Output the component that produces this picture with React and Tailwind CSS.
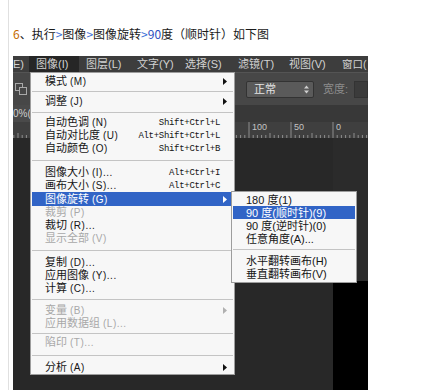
import React from "react";

const CJK = "font-['Noto_Sans_CJK_SC',sans-serif]";
const MENU = "font-['Liberation_Sans','Noto_Sans_CJK_SC',sans-serif]";

const mainItems = [
  { label: "模式(M)", arrow: true },
  { sep: "h-[7px]" },
  { label: "调整(J)", arrow: true },
  { sep: "h-[8px]" },
  { label: "自动色调(N)", sc: "Shift+Ctrl+L" },
  { label: "自动对比度(U)", sc: "Alt+Shift+Ctrl+L" },
  { label: "自动颜色(O)", sc: "Shift+Ctrl+B" },
  { sep: "h-[11px]" },
  { label: "图像大小(I)...", sc: "Alt+Ctrl+I" },
  { label: "画布大小(S)...", sc: "Alt+Ctrl+C" },
  { label: "图像旋转(G)", arrow: true, active: true, tall: true },
  { label: "裁剪(P)", disabled: true },
  { label: "裁切(R)..." },
  { label: "显示全部(V)", disabled: true },
  { sep: "h-[11px]" },
  { label: "复制(D)..." },
  { label: "应用图像(Y)..." },
  { label: "计算(C)..." },
  { sep: "h-[9px]" },
  { label: "变量(B)", arrow: true, disabled: true },
  { label: "应用数据组(L)...", disabled: true },
  { sep: "h-[6px]" },
  { label: "陷印(T)...", disabled: true },
  { sep: "h-[12px]" },
  { label: "分析(A)", arrow: true },
];

const subItems = [
  { label: "180 度(1)" },
  { label: "90 度(顺时针)(9)", active: true },
  { label: "90 度(逆时针)(0)" },
  { label: "任意角度(A)..." },
  { sep: "h-[9px]" },
  { label: "水平翻转画布(H)" },
  { label: "垂直翻转画布(V)" },
];

function Arrow({ color }) {
  return (
    <svg width="4" height="7" viewBox="0 0 4 7" className="block">
      <path d="M0 0 L4 3.5 L0 7 Z" fill={color} />
    </svg>
  );
}

function Sep({ h }) {
  return (
    <div className={`${h} flex items-center`}>
      <div className="w-full h-px bg-[#c4c4c4]" />
    </div>
  );
}

function Label({ text }) {
  const m = text.match(/^([^(]+)(\(.*)$/);
  if (!m) return <span>{text}</span>;
  return (
    <span className="whitespace-nowrap">
      <span>{m[1]}</span>
      <span className="ml-[3px] text-[10px] tracking-[0.5px]">{m[2]}</span>
    </span>
  );
}

function MainMenu() {
  return (
    <div className={`absolute left-[17px] top-[16px] w-[205px] h-[303px] bg-[#f7f7f7] border border-[#9d9d9d] px-px pt-[2px] ${MENU} text-[11px]`}>
      {mainItems.map((it, i) => {
        if (it.sep) return <Sep key={i} h={it.sep} />;
        const color = it.active
          ? "bg-[#3164c6] text-white"
          : it.disabled
          ? "text-[#a8a8a8]"
          : "text-[#151515]";
        return (
          <div
            key={i}
            className={`${it.tall ? "h-[14px]" : "h-[13px]"} flex items-center pl-[13px] pr-[5px] leading-[12px] ${color}`}
          >
            <div className="flex-1">
              <Label text={it.label} />
            </div>
            {it.sc && (
              <span className="font-['Liberation_Mono',monospace] text-[9px] tracking-[-0.3px]">
                {it.sc}
              </span>
            )}
            <div className="w-[8px] flex justify-end pr-[1px]">
              {it.arrow && (
                <Arrow color={it.active ? "#ffffff" : it.disabled ? "#b0b0b0" : "#111111"} />
              )}
            </div>
          </div>
        );
      })}
    </div>
  );
}

function SubMenu() {
  return (
    <div className={`absolute left-[218px] top-[135px] w-[126px] h-[92px] bg-[#f7f7f7] border border-[#9d9d9d] px-px pt-px ${MENU} text-[11px]`}>
      {subItems.map((it, i) => {
        if (it.sep) return <Sep key={i} h={it.sep} />;
        return (
          <div
            key={i}
            className={`h-[13px] flex items-center pl-[13px] leading-[12px] whitespace-nowrap ${
              it.active ? "bg-[#3164c6] text-white" : "text-[#151515]"
            }`}
          >
            {it.label}
          </div>
        );
      })}
    </div>
  );
}

function Ruler() {
  const ticks = [];
  for (let i = 0; i < 90; i++) {
    const x = 236 - 42 * 6 + i * 4.2;
    if (x < 0 || x > 355) continue;
    const k = i % 10;
    const h = k === 0 ? 16 : k === 5 ? 5 : 3;
    ticks.push(
      <line key={i} x1={x} x2={x} y1={16 - h} y2={16} stroke="#8e8e8e" strokeWidth="1" />
    );
  }
  return (
    <svg width="355" height="16" className="block">
      {ticks}
      <text x="239" y="8" fontSize="9" fill="#c4c4c4" fontFamily="Liberation Sans">100</text>
      <text x="281" y="8" fontSize="9" fill="#c4c4c4" fontFamily="Liberation Sans">50</text>
      <text x="323" y="8" fontSize="9" fill="#c4c4c4" fontFamily="Liberation Sans">0</text>
    </svg>
  );
}

function Screenshot() {
  const bar = [
    { t: "图层(L)", w: "w-[51px]" },
    { t: "文字(Y)", w: "w-[48px]" },
    { t: "选择(S)", w: "w-[53px]" },
    { t: "滤镜(T)", w: "w-[51px]" },
    { t: "视图(V)", w: "w-[53px]" },
  ];
  return (
    <div className={`relative w-[355px] h-[334px] bg-[#282828] flex flex-col overflow-hidden ${MENU}`}>
      {/* menu bar */}
      <div className="h-[16px] shrink-0 bg-[#3d3d3d] flex items-center text-[11px] leading-[12px] text-[#d2d2d2] whitespace-nowrap">
        <div className="w-[16px] shrink-0">E)</div>
        <div className="w-[50px] shrink-0 h-full flex items-center pl-[7px] bg-[#262626]">图像(I)</div>
        {bar.map((b) => (
          <div key={b.t} className={`${b.w} shrink-0 pl-[7px]`}>
            {b.t}
          </div>
        ))}
        <div className="shrink-0 pl-[7px] text-[10.5px]">窗口(</div>
      </div>
      {/* options bar */}
      <div className="h-[33px] shrink-0 bg-[#474747] border-t border-[#545454] flex items-center text-[11px] leading-[12px]">
        <svg width="12" height="12" viewBox="0 0 12 12" className="ml-[2px] shrink-0">
          <rect x="0.5" y="0.5" width="7" height="7" fill="none" stroke="#a9a9a9" />
          <rect x="4.5" y="4.5" width="7" height="7" fill="#474747" stroke="#a9a9a9" />
        </svg>
        <div className="flex-1" />
        <span className="text-[#c8c8c8]">式:</span>
        <div className="ml-[13px] w-[68px] h-[17px] rounded-[2px] bg-[#5a5a5a] border border-[#333] flex items-center pl-[7px] pr-[4px] text-[#e4e4e4]">
          <span className="flex-1">正常</span>
          <svg width="5" height="9" viewBox="0 0 5 9">
            <path d="M0 3.5 L2.5 0.5 L5 3.5 Z M0 5.5 L2.5 8.5 L5 5.5 Z" fill="#cfcfcf" />
          </svg>
        </div>
        <span className="ml-[9px] text-[#8c8c8c]">宽度:</span>
        <div className="ml-[6px] w-[14px] h-[17px] bg-[#3b3b3b] border border-[#333] shrink-0" />
      </div>
      {/* tab row */}
      <div className="h-[17px] shrink-0 bg-[#383838] flex items-center text-[10px] leading-[11px] text-[#cfcfcf] whitespace-nowrap overflow-hidden">
        <div className="h-full w-[17px] bg-[#4a4a4a] flex items-center">0%(</div>
      </div>
      {/* ruler */}
      <div className="h-[16px] shrink-0 bg-[#3f3f3f]">
        <Ruler />
      </div>
      {/* canvas */}
      <div className="flex-1 flex">
        <div className="flex-1 bg-[#282828]" />
        <div className="w-[35px] flex flex-col">
          <div className="h-[143px] bg-[#2b2b2b]" />
          <div className="flex-1 bg-black" />
        </div>
      </div>
      <MainMenu />
      <SubMenu />
    </div>
  );
}

export default function App() {
  return (
    <div className={`w-[424px] h-[390px] bg-white overflow-hidden ${CJK}`}>
      <div className="ml-[8px] h-full border-l border-[#e0e0e0] pl-[4px]">
        <div className="h-[56px] pt-[26px] text-[12px] leading-[15px] text-[#1a1a1a] whitespace-nowrap">
          <span className="text-[#c46a00]">6</span>、执行<span className="text-[#3a6fd8]">&gt;</span>图像<span className="text-[#3a6fd8]">&gt;</span>图像旋转<span className="text-[#3a6fd8]">&gt;</span><span className="text-[#2f4fbf]">90</span>度（顺时针）如下图
        </div>
        <Screenshot />
      </div>
    </div>
  );
}
